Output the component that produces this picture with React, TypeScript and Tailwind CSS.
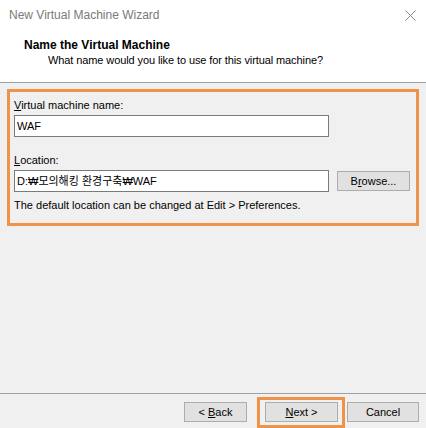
import React from "react";

const FONT = "font-['Liberation_Sans','Noto_Sans_CJK_KR',sans-serif]";

function WinButton({
  children,
  className = "",
}: {
  children: React.ReactNode;
  className?: string;
}) {
  return (
    <div
      className={`h-[20px] flex items-center justify-center bg-[#e1e1e1] border border-[#adadad] text-[11px] text-black ${className}`}
    >
      {children}
    </div>
  );
}

export default function App() {
  return (
    <div
      className={`w-[426px] h-[428px] bg-[#f0f0f0] flex flex-col overflow-hidden ${FONT}`}
    >
      {/* title bar */}
      <div className="h-[30px] bg-white flex items-center justify-between pl-[9px] pr-[10px]">
        <span className="text-[12px] text-[#7a7a7a]">New Virtual Machine Wizard</span>
        <svg width="11" height="11" viewBox="0 0 11 11">
          <path d="M0.5 0.5 L10.5 10.5 M10.5 0.5 L0.5 10.5" stroke="#8a8a8a" strokeWidth="1" />
        </svg>
      </div>

      {/* header */}
      <div className="h-[53px] bg-white border-b border-[#a0a0a0] pl-[24px] pt-[8px]">
        <div className="text-[12px] font-bold text-black leading-[14px]">
          Name the Virtual Machine
        </div>
        <div className="text-[11px] text-black leading-[14px] pl-[24px] mt-[1px] tracking-[-0.1px]">
          What name would you like to use for this virtual machine?
        </div>
      </div>

      {/* content */}
      <div className="px-[7px] pt-[6px]">
        <div className="h-[137px] border-[3px] border-[#ee9347] px-[4px] pt-[6px]">
          <div className="text-[11px] leading-[14px] text-black">
            <span className="underline">V</span>irtual machine name:
          </div>
          <div className="mt-[3px] w-[315px] h-[22px] bg-white border border-[#7a7a7a] flex items-center pl-[2px] text-[11px]">
            WAF
          </div>
          <div className="mt-[16px] text-[11px] leading-[14px] text-black">
            <span className="underline">L</span>ocation:
          </div>
          <div className="mt-[3px] flex items-center gap-[8px]">
            <div className="w-[315px] h-[22px] bg-white border border-[#7a7a7a] flex items-center pl-[2px] text-[11px]">
              D:₩모의해킹 환경구축₩WAF
            </div>
            <WinButton className="w-[73px]">
              B<span className="underline">r</span>owse...
            </WinButton>
          </div>
          <div className="mt-[6px] text-[11px] leading-[14px] text-black">
            The default location can be changed at Edit &gt; Preferences.
          </div>
        </div>
      </div>

      <div className="flex-1" />

      {/* footer */}
      <div className="h-[35px] border-t border-[#a0a0a0] flex justify-end items-start pt-[8px] pr-[7px]">
        <WinButton className="w-[63px]">
          &lt; <span className="underline ml-[3px]">B</span>ack
        </WinButton>
        <div className="relative ml-[18px]">
          <WinButton className="w-[73px]">
            <span className="underline">N</span>ext &gt;
          </WinButton>
          <div className="absolute left-[-8px] right-[-7px] top-[-5px] bottom-[-6px] border-[3px] border-[#ee9347]" />
        </div>
        <WinButton className="w-[72px] ml-[9px]">Cancel</WinButton>
      </div>
    </div>
  );
}
